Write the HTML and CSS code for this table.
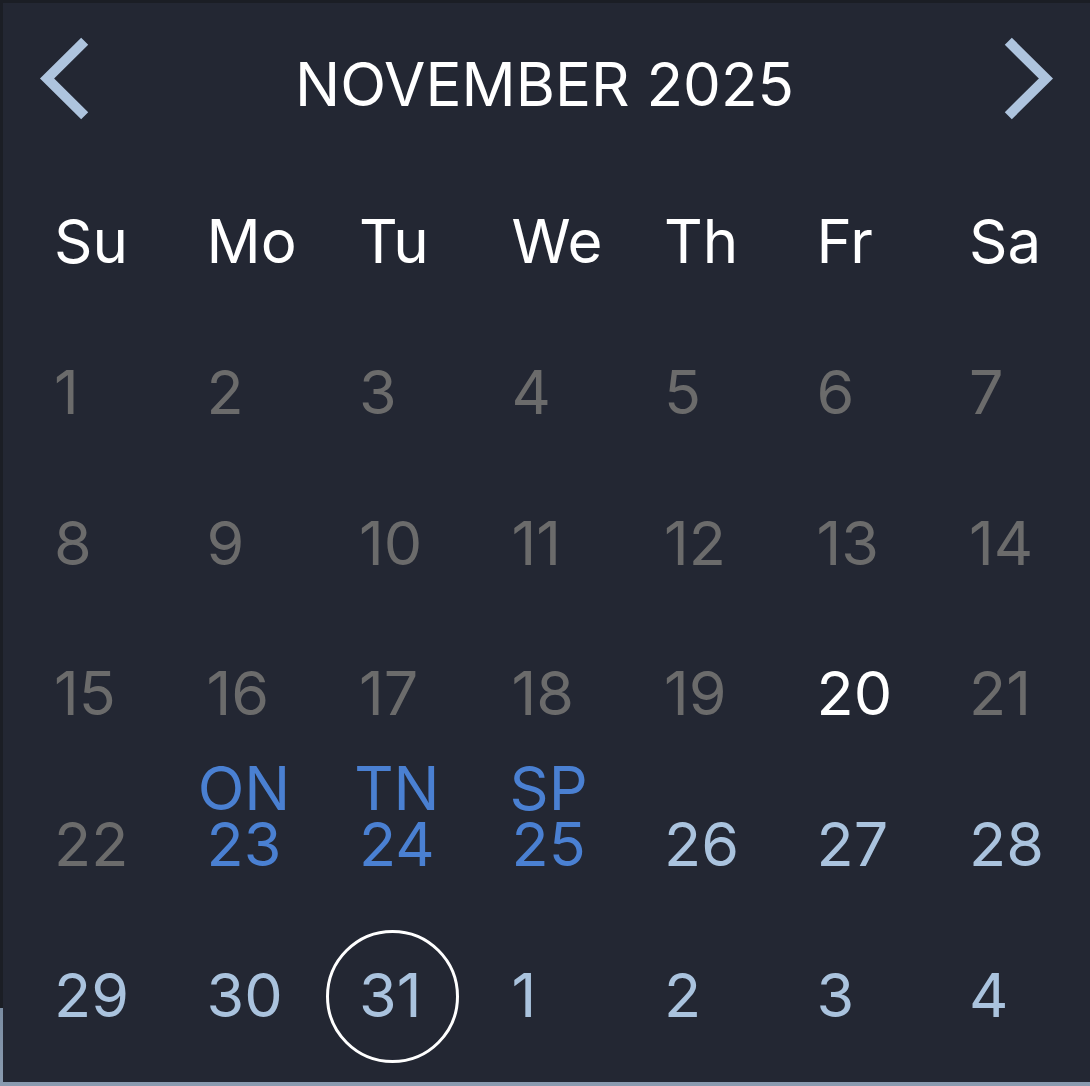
FILE: index.html
```html
<!DOCTYPE html>
<html lang="en">
<head>
<meta charset="utf-8">
<title>November 2025</title>
<link rel="stylesheet" href="styles.css">
</head>
<body>
<div class="cal">
  <div class="head">
    <svg class="nav" width="100" height="150" viewBox="0 0 100 150" aria-label="Previous month"><polyline points="81.7,32.3 44.1,69.5 81.7,106.7" /></svg>
    <div class="title">NOVEMBER 2025</div>
    <svg class="nav" width="100" height="150" viewBox="0 0 100 150" aria-label="Next month"><polyline points="18.3,32.3 55.9,69.5 18.3,106.7" /></svg>
  </div>
  <div class="grid week">
    <div>Su</div><div>Mo</div><div>Tu</div><div>We</div><div>Th</div><div>Fr</div><div>Sa</div>
  </div>
  <div class="grid days">
    <div class="past">1</div><div class="past">2</div><div class="past">3</div><div class="past">4</div><div class="past">5</div><div class="past">6</div><div class="past">7</div>
    <div class="past">8</div><div class="past">9</div><div class="past">10</div><div class="past">11</div><div class="past">12</div><div class="past">13</div><div class="past">14</div>
    <div class="past">15</div><div class="past">16</div><div class="past">17</div><div class="past">18</div><div class="past">19</div><div class="today">20</div><div class="past">21</div>
    <div class="past">22</div>
    <div class="event"><span class="num">23<span class="lbl">ON</span></span></div>
    <div class="event"><span class="num">24<span class="lbl">TN</span></span></div>
    <div class="event"><span class="num">25<span class="lbl">SP</span></span></div>
    <div class="future">26</div><div class="future">27</div><div class="future">28</div>
    <div class="future">29</div><div class="future">30</div>
    <div class="future"><span class="num">31<span class="ring"></span></span></div>
    <div class="future">1</div><div class="future">2</div><div class="future">3</div><div class="future">4</div>
  </div>
</div>
</body>
</html>
```
FILE: styles.css
```css
html, body {
  margin: 0;
  padding: 0;
}
body {
  width: 1090px;
  height: 1086px;
  overflow: hidden;
  background: linear-gradient(to bottom, #1b1e25 0, #1b1e25 1008px, #7a8ca2 1008px, #8a9bb0 1086px);
  font-family: Inter, "Noto Sans", sans-serif;
}
.cal {
  margin: 3px 0 0 3px;
  width: 1087px;
  height: 1079px;
  box-sizing: border-box;
  padding-top: 6px;
  background: #232733;
  overflow: hidden;
}
.head {
  display: flex;
  align-items: center;
  height: 150px;
}
.nav {
  flex: none;
  display: block;
}
.nav polyline {
  fill: none;
  stroke: #aec4de;
  stroke-width: 10;
  stroke-linejoin: miter;
  stroke-linecap: butt;
}
.title {
  flex: 1;
  text-align: center;
  color: #ffffff;
  font-size: 60px;
  line-height: 150px;
  padding-right: 4px;
}
.grid {
  display: grid;
  grid-template-columns: repeat(6, 152.5px) 1fr;
  padding-left: 51px;
}
.week {
  margin-top: 7px;
  color: #ffffff;
  font-size: 60px;
  line-height: 150.75px;
}
.days {
  font-size: 61px;
  line-height: 150.75px;
}
.past { color: #6b6b6b; }
.today { color: #ffffff; }
.future { color: #aac3de; }
.event { color: #4a80d2; }
.num {
  position: relative;
  display: inline-block;
  line-height: 46px;
}
.lbl {
  position: absolute;
  top: -56px;
  left: 50%;
  transform: translateX(-50%);
  line-height: 46px;
}
.ring {
  position: absolute;
  top: 50%;
  left: 50%;
  width: 133px;
  height: 133px;
  margin: -64.5px 0 0 -64px;
  box-sizing: border-box;
  border: 3px solid #ffffff;
  border-radius: 50%;
}
```
